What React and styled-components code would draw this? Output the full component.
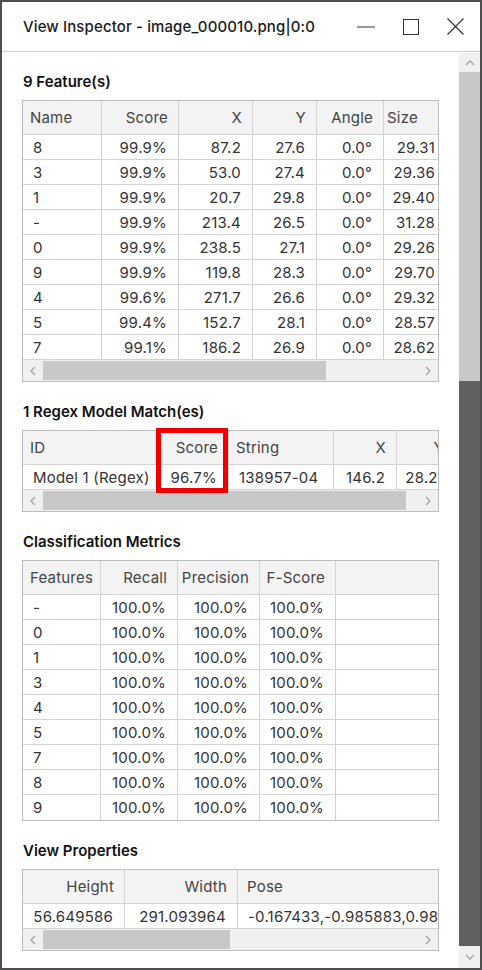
import React from 'react';
import styled, { createGlobalStyle } from 'styled-components';

const GlobalStyle = createGlobalStyle`
  html, body {
    margin: 0;
    padding: 0;
    background: #fff;
  }
  body {
    font-family: Inter, "Noto Sans", sans-serif;
    -webkit-font-smoothing: antialiased;
  }
`;

const features = [
  ['8', '99.9%', '87.2', '27.6', '0.0°', '29.31'],
  ['3', '99.9%', '53.0', '27.4', '0.0°', '29.36'],
  ['1', '99.9%', '20.7', '29.8', '0.0°', '29.40'],
  ['-', '99.9%', '213.4', '26.5', '0.0°', '31.28'],
  ['0', '99.9%', '238.5', '27.1', '0.0°', '29.26'],
  ['9', '99.9%', '119.8', '28.3', '0.0°', '29.70'],
  ['4', '99.6%', '271.7', '26.6', '0.0°', '29.32'],
  ['5', '99.4%', '152.7', '28.1', '0.0°', '28.57'],
  ['7', '99.1%', '186.2', '26.9', '0.0°', '28.62'],
];

const featureCols = [
  { title: 'Name', w: 79, head: 'left', data: 'left' },
  { title: 'Score', w: 77 },
  { title: 'X', w: 74 },
  { title: 'Y', w: 64 },
  { title: 'Angle', w: 67 },
  { title: 'Size', w: 63, head: 'left', headPad: 3 },
];

const regexCols = [
  { title: 'ID', w: 135, head: 'left', data: 'left' },
  { title: 'Score', w: 71 },
  { title: 'String', w: 105, head: 'left', data: 'left' },
  { title: 'X', w: 63 },
  { title: 'Y', w: 62, headPad: 14 },
];

const regexRows = [['Model 1 (Regex)', '96.7%', '138957-04', '146.2', '28.25']];

const metricCols = [
  { title: 'Features', w: 78, head: 'left', data: 'left' },
  { title: 'Recall', w: 77 },
  { title: 'Precision', w: 82 },
  { title: 'F-Score', w: 76 },
  { title: '', fill: true },
];

const metricRows = ['-', '0', '1', '3', '4', '5', '7', '8', '9'].map((f) => [
  f,
  '100.0%',
  '100.0%',
  '100.0%',
  '',
]);

const propCols = [
  { title: 'Height', w: 102 },
  { title: 'Width', w: 113 },
  { title: 'Pose', w: 320, head: 'left', data: 'left', headPad: 9 },
];

const propRows = [['56.649586', '291.093964', '-0.167433,-0.985883,0.985883,-0.167433']];

const Chevron = ({ dir }) => {
  const paths = {
    up: 'M1 6 L5 2 L9 6',
    down: 'M1 2 L5 6 L9 2',
    left: 'M6 1 L2 5 L6 9',
    right: 'M2 1 L6 5 L2 9',
  };
  const vertical = dir === 'up' || dir === 'down';
  return (
    <svg width={vertical ? 10 : 8} height={vertical ? 8 : 10} viewBox={vertical ? '0 0 10 8' : '0 0 8 10'}>
      <path d={paths[dir]} fill="none" stroke="#a3a3a3" strokeWidth="1.3" />
    </svg>
  );
};

const DataTable = ({ cols, rows, thumb, highlight }) => (
  <TableHolder>
    <Grid>
      <Row header>
        {cols.map((c, i) => (
          <Cell
            key={i}
            $w={c.w}
            $fill={c.fill}
            $align={c.head || 'right'}
            $pad={c.headPad ?? (c.head === 'left' ? 7 : 10)}
          >
            {c.title}
          </Cell>
        ))}
      </Row>
      {rows.map((r, ri) => (
        <Row key={ri}>
          {r.map((v, ci) => (
            <Cell
              key={ci}
              $w={cols[ci].w}
              $fill={cols[ci].fill}
              $align={cols[ci].data || 'right'}
              $pad={cols[ci].data === 'left' ? 10 : 11}
            >
              {v}
            </Cell>
          ))}
        </Row>
      ))}
      {thumb && (
        <HScroll>
          <HArrow>
            <Chevron dir="left" />
          </HArrow>
          <HThumb $w={thumb} />
          <HTrack />
          <HArrow>
            <Chevron dir="right" />
          </HArrow>
        </HScroll>
      )}
    </Grid>
    {highlight && <Highlight />}
  </TableHolder>
);

export default function App() {
  return (
    <>
      <GlobalStyle />
      <Window>
        <TitleBar>
          <Title>View Inspector - image_000010.png|0:0</Title>
          <Controls>
            <ControlButton>
              <svg width="18" height="2" viewBox="0 0 18 2">
                <line x1="0" y1="1" x2="18" y2="1" stroke="#333" strokeWidth="1" />
              </svg>
            </ControlButton>
            <ControlButton>
              <svg width="16" height="16" viewBox="0 0 16 16">
                <rect x="0.5" y="0.5" width="15" height="15" fill="none" stroke="#333" strokeWidth="1" />
              </svg>
            </ControlButton>
            <ControlButton>
              <svg width="17" height="17" viewBox="0 0 17 17">
                <path d="M0.5 0.5 L16.5 16.5 M16.5 0.5 L0.5 16.5" stroke="#333" strokeWidth="1.1" />
              </svg>
            </ControlButton>
          </Controls>
        </TitleBar>
        <Body>
          <Content>
            <Section>
              <Heading>9 Feature(s)</Heading>
              <DataTable cols={featureCols} rows={features} thumb={283} />
            </Section>
            <Section>
              <Heading>1 Regex Model Match(es)</Heading>
              <DataTable cols={regexCols} rows={regexRows} thumb={363} highlight />
            </Section>
            <Section>
              <Heading>Classification Metrics</Heading>
              <DataTable cols={metricCols} rows={metricRows} />
            </Section>
            <Section>
              <Heading>View Properties</Heading>
              <DataTable cols={propCols} rows={propRows} thumb={187} />
            </Section>
          </Content>
          <VScroll>
            <VButton $h={19}>
              <Chevron dir="up" />
            </VButton>
            <VTrack />
            <VThumb />
            <VButton $h={22}>
              <Chevron dir="down" />
            </VButton>
          </VScroll>
        </Body>
      </Window>
    </>
  );
}

const Window = styled.div`
  box-sizing: border-box;
  width: 482px;
  height: 970px;
  border: 2px solid #4f4f4f;
  background: #fff;
  display: flex;
  flex-direction: column;
  overflow: hidden;
`;

const TitleBar = styled.div`
  flex-shrink: 0;
  height: 49px;
  border-bottom: 1px solid #cdcdcd;
  display: flex;
  align-items: center;
  padding-left: 21px;
`;

const Title = styled.div`
  flex: 1;
  font-size: 15px;
  font-weight: 500;
  letter-spacing: 0.12px;
  color: #1a1a1a;
  white-space: nowrap;
`;

const Controls = styled.div`
  display: flex;
  height: 100%;
  margin-right: 2px;
`;

const ControlButton = styled.div`
  width: 45px;
  height: 100%;
  display: flex;
  align-items: center;
  justify-content: center;
`;

const Body = styled.div`
  flex: 1;
  min-height: 0;
  display: flex;
`;

const Content = styled.div`
  flex: 1;
  min-width: 0;
  padding: 20px 20px 0 20px;
  overflow: hidden;
`;

const Section = styled.div`
  margin-bottom: 20px;
`;

const Heading = styled.div`
  height: 20px;
  line-height: 20px;
  margin: 0 0 8px 1px;
  font-size: 15px;
  font-weight: 600;
  color: #111;
`;

const TableHolder = styled.div`
  position: relative;
`;

const Grid = styled.div`
  box-sizing: border-box;
  width: 100%;
  border: 1px solid #bdbdbd;
  overflow: hidden;
  font-size: 15px;
  letter-spacing: 0.2px;
  color: #333;
`;

const Row = styled.div`
  box-sizing: border-box;
  display: flex;
  height: ${(p) => (p.header ? 34 : 25)}px;
  border-bottom: 1px solid #d3d3d3;
  background: ${(p) => (p.header ? '#f3f3f3' : '#fff')};
  color: ${(p) => (p.header ? '#444' : '#333')};
  white-space: nowrap;

  &:last-child {
    border-bottom: none;
  }
`;

const Cell = styled.div`
  box-sizing: border-box;
  flex: ${(p) => (p.$fill ? '1 1 auto' : `0 0 ${p.$w}px`)};
  border-right: ${(p) => (p.$fill ? 'none' : '1px solid #d3d3d3')};
  padding: 0 ${(p) => p.$pad}px;
  text-align: ${(p) => p.$align};
  display: flex;
  align-items: center;
  justify-content: ${(p) => (p.$align === 'left' ? 'flex-start' : 'flex-end')};
  overflow: hidden;
`;

const HScroll = styled.div`
  display: flex;
  height: 21px;
  background: #f0f0f0;
`;

const HArrow = styled.div`
  flex: 0 0 20px;
  display: flex;
  align-items: center;
  justify-content: center;
`;

const HThumb = styled.div`
  flex: 0 0 ${(p) => p.$w}px;
  margin: 1px 0;
  background: #c8c8c8;
`;

const HTrack = styled.div`
  flex: 1;
`;

const Highlight = styled.div`
  position: absolute;
  left: 134px;
  top: -2px;
  width: 72px;
  height: 65px;
  box-sizing: border-box;
  border: 5px solid #f00000;
  pointer-events: none;
`;

const VScroll = styled.div`
  flex: 0 0 21px;
  margin-top: 1px;
  display: flex;
  flex-direction: column;
`;

const VButton = styled.div`
  flex: 0 0 ${(p) => p.$h}px;
  background: #f0f0f0;
  display: flex;
  align-items: center;
  justify-content: center;
`;

const VTrack = styled.div`
  flex: 0 0 309px;
  background: #c8c8c8;
`;

const VThumb = styled.div`
  flex: 1;
  background: #606060;
`;
